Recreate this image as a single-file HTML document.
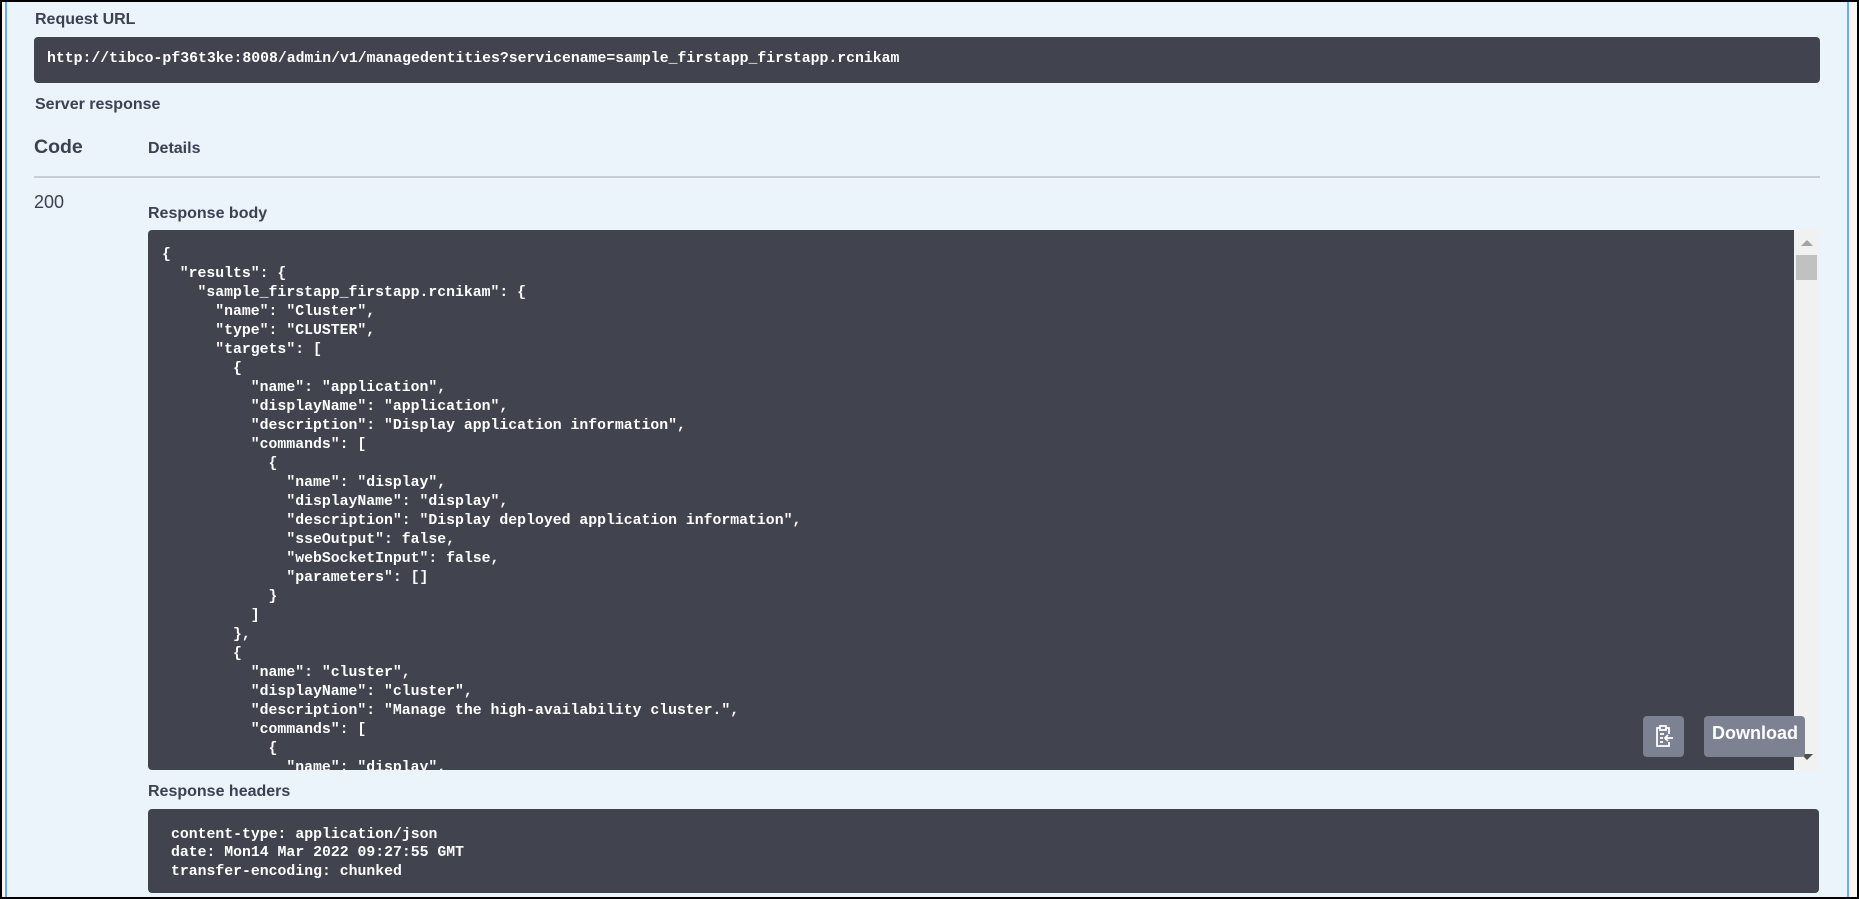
<!DOCTYPE html>
<html><head><meta charset="utf-8"><style>
*{margin:0;padding:0;box-sizing:border-box}
html,body{width:1859px;height:899px;overflow:hidden;background:#000}
.frame{position:absolute;left:2px;top:2px;width:1855px;height:895px;background:#f7f7f7}
.inner{position:absolute;left:5px;top:2px;width:1844px;height:895px;background:#ebf3fb;border-left:2px solid #61affe;border-right:2px solid #61affe}
.t{position:absolute;font-family:"Liberation Sans",sans-serif;color:#3b4151;white-space:nowrap;line-height:1}
.b{font-weight:bold;font-size:16px}
.box{position:absolute;background:#41444e;border-radius:4px;overflow:hidden}
pre{font-family:"Liberation Mono",monospace;font-weight:bold;font-size:14.8px;color:#fff;white-space:pre}
.btn{position:absolute;background:#7d8293;border-radius:4px}
</style></head><body>
<div class="frame"></div>
<div class="inner"></div>
<div class="t b" style="left:35px;top:12px">Request URL</div>
<div class="box" style="left:34px;top:37px;width:1786px;height:46px"><pre style="position:absolute;left:13px;top:13px;line-height:19px">http://tibco-pf36t3ke:8008/admin/v1/managedentities?servicename=sample_firstapp_firstapp.rcnikam</pre></div>
<div class="t b" style="left:35px;top:97px">Server response</div>
<div class="t" style="left:34px;top:138px;font-size:19.5px;font-weight:bold">Code</div>
<div class="t b" style="left:148px;top:141px">Details</div>
<div style="position:absolute;left:34px;top:176px;width:1786px;height:2px;background:#c8ccd4"></div>
<div class="t" style="left:34px;top:193px;font-size:18px">200</div>
<div class="t b" style="left:148px;top:206px">Response body</div>
<div class="box" style="left:148px;top:230px;width:1646px;height:540px;border-radius:4px 0 0 4px"><pre style="position:absolute;left:14px;top:15.5px;line-height:19px">{
  "results": {
    "sample_firstapp_firstapp.rcnikam": {
      "name": "Cluster",
      "type": "CLUSTER",
      "targets": [
        {
          "name": "application",
          "displayName": "application",
          "description": "Display application information",
          "commands": [
            {
              "name": "display",
              "displayName": "display",
              "description": "Display deployed application information",
              "sseOutput": false,
              "webSocketInput": false,
              "parameters": []
            }
          ]
        },
        {
          "name": "cluster",
          "displayName": "cluster",
          "description": "Manage the high-availability cluster.",
          "commands": [
            {
              "name": "display",</pre></div>
<div style="position:absolute;left:1794px;top:230px;width:25px;height:540px;background:#f1f1f1"></div>
<div style="position:absolute;left:1801px;top:240px;width:0;height:0;border-left:6px solid transparent;border-right:6px solid transparent;border-bottom:6px solid #a3a3a3"></div>
<div style="position:absolute;left:1796px;top:255px;width:21px;height:25px;background:#c1c1c1"></div>
<div style="position:absolute;left:1801px;top:754px;width:0;height:0;border-left:6px solid transparent;border-right:6px solid transparent;border-top:6px solid #505050"></div>
<div class="btn" style="left:1643px;top:716px;width:41px;height:41px">
<svg width="41" height="41" viewBox="0 0 41 41" style="position:absolute;left:0;top:0"><g fill="none" stroke="#fff" stroke-width="1.8"><path d="M17 12h-3v18h12v-4"/><path d="M26 18v-6h-3"/><rect x="17" y="10" width="6" height="4"/><path d="M17 18h4M17 22h3M17 26h3"/><path d="M30 22h-8m3-3l-3 3 3 3"/></g></svg></div>
<div class="btn" style="left:1704px;top:716px;width:101px;height:41px"><div class="t" style="left:8px;top:8px;color:#fff;font-weight:bold;font-size:18px">Download</div></div>
<div class="t b" style="left:148px;top:784px">Response headers</div>
<div class="box" style="left:148px;top:809px;width:1671px;height:84px"><pre style="position:absolute;left:23px;top:16.5px;line-height:18.6px">content-type: application/json
date: Mon14 Mar 2022 09:27:55 GMT
transfer-encoding: chunked</pre></div>
</body></html>
